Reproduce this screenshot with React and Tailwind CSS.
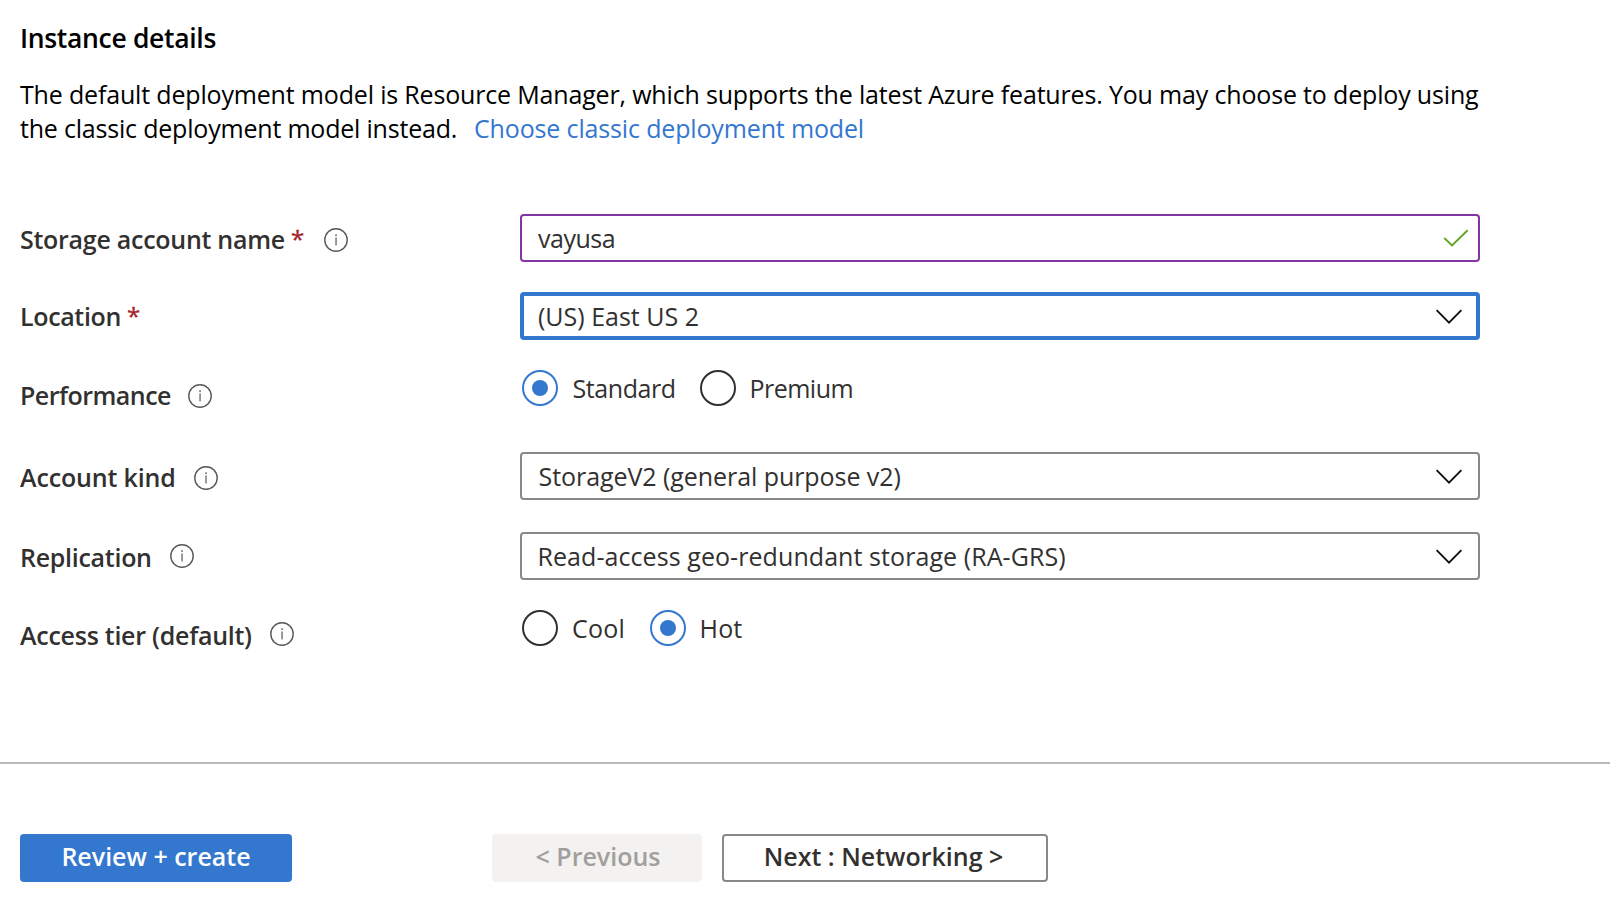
function InfoIcon({ className = "" }) {
  return (
    <svg viewBox="0 0 24 24" className={`size-6 shrink-0 ${className}`} fill="none">
      <circle cx="12" cy="12" r="11.2" stroke="#5a5957" strokeWidth="1.4" />
      <rect x="11.3" y="9.4" width="1.5" height="8" fill="#7a7977" />
      <rect x="11.2" y="6.3" width="1.7" height="1.7" fill="#7a7977" />
    </svg>
  );
}

function Chevron() {
  return (
    <svg viewBox="0 0 28 16" className="h-4 w-7 shrink-0" fill="none">
      <path d="M1.6 2.2 14 14.6 26.4 2.2" stroke="#111" strokeWidth="1.9" />
    </svg>
  );
}

function Label({ children, required, className = "", textClass = "", icon }) {
  return (
    <div className={`flex w-[500px] shrink-0 items-start ${className}`}>
      <div className={`shrink-0 font-semibold ${textClass}`}>
        {children}
        {required && (
          <span className="ml-[6px] inline-block -translate-y-px text-[24px] leading-none font-normal text-[#a4262c] [-webkit-text-stroke:0.4px_#a4262c]">
            *
          </span>
        )}
      </div>
      {icon && <InfoIcon className={icon} />}
    </div>
  );
}

function Radio({ checked, children, className = "" }) {
  return (
    <label className={`flex h-9 shrink-0 items-center ${className}`}>
      <span
        className={`flex size-9 shrink-0 items-center justify-center rounded-full border-2 ${
          checked ? "border-[#3477cf]" : "border-[#323130]"
        }`}
      >
        {checked && <span className="size-4 rounded-full bg-[#3477cf]" />}
      </span>
      {children}
    </label>
  );
}

function Select({ children, className = "" }) {
  return (
    <div className={`flex h-12 w-[960px] items-center justify-between rounded-[4px] ${className}`}>
      {children}
      <Chevron />
    </div>
  );
}

export default function App() {
  return (
    <div className="flex h-[912px] w-[1610px] flex-col overflow-hidden bg-white font-['Open_Sans','Segoe_UI',sans-serif] text-[25px] leading-[34px] whitespace-nowrap text-[#323130]">
      <main className="flex h-[762px] flex-col pt-5 pl-5">
        <h1 className="text-[26.5px] leading-9 font-semibold tracking-[-0.32px] text-black">Instance details</h1>
        <p className="mt-[21px] text-black">
          <span className="block tracking-[-0.17px]">
            The default deployment model is Resource Manager, which supports the latest Azure features. You may choose to deploy using
          </span>
          <span className="flex">
            <span className="w-[454px] tracking-[-0.2px]">the classic deployment model instead.</span>
            <a className="tracking-[-0.15px] text-[#3477cf]">Choose classic deployment model</a>
          </span>
        </p>

        <form className="mt-[69px] flex flex-col">
          <div className="flex h-[78px]">
            <Label required className="pt-2" textClass="w-[304px] tracking-[-0.27px]" icon="mt-1.5">
              Storage account name
            </Label>
            <div className="flex h-12 w-[960px] items-center justify-between rounded-[4px] border-2 border-[#8235a3] pr-[9px] pl-4">
              <span className="tracking-[-0.5px]">vayusa</span>
              <svg viewBox="0 0 26 18" className="h-[18px] w-[26px]" fill="none">
                <path d="M1.3 9 9 16.4 24.7 1.2" stroke="#5fa52a" strokeWidth="1.9" />
              </svg>
            </div>
          </div>
          <div className="flex h-[78px]">
            <Label required className="pt-[7px]" textClass="tracking-[-0.35px]">
              Location
            </Label>
            <Select className="border-4 border-[#3477cf] pr-[13px] pl-[14px]">
              <span>(US) East US 2</span>
            </Select>
          </div>
          <div className="flex h-[82px]">
            <Label className="pt-2" textClass="w-[168px] tracking-[-0.53px]" icon="mt-1.5">
              Performance
            </Label>
            <div className="flex pl-0.5">
              <Radio checked className="w-[178px] gap-[14.5px]">
                <span className="tracking-[-0.42px]">Standard</span>
              </Radio>
              <Radio className="gap-[13.5px]">
                <span className="tracking-[-0.52px]">Premium</span>
              </Radio>
            </div>
          </div>
          <div className="flex h-20">
            <Label className="pt-2" textClass="w-[174px] tracking-[-0.15px]" icon="mt-1.5">
              Account kind
            </Label>
            <Select className="border-2 border-[#8a8886] pr-[15px] pl-[16.5px]">
              <span className="tracking-[-0.06px]">StorageV2 (general purpose v2)</span>
            </Select>
          </div>
          <div className="flex h-[78px]">
            <Label className="pt-2" textClass="w-[150px] tracking-[-0.28px]" icon="mt-1">
              Replication
            </Label>
            <Select className="border-2 border-[#8a8886] pr-[15px] pl-[15.5px]">
              <span className="tracking-[0.07px]">Read-access geo-redundant storage (RA-GRS)</span>
            </Select>
          </div>
          <div className="flex h-12">
            <Label className="pt-2" textClass="w-[250px] tracking-[-0.26px]" icon="mt-1">
              Access tier (default)
            </Label>
            <div className="flex pl-0.5">
              <Radio className="w-32 gap-[14px]">
                <span className="tracking-[0.2px]">Cool</span>
              </Radio>
              <Radio checked className="gap-[13.5px]">
                <span className="tracking-[0.2px]">Hot</span>
              </Radio>
            </div>
          </div>
        </form>
      </main>

      <footer className="flex h-[150px] border-t-2 border-[#b9b9b9] pt-[70px] pl-5 font-semibold">
        <button className="h-12 w-[272px] rounded-[4px] bg-[#3477cf] pb-1 text-white">Review + create</button>
        <button className="ml-[200px] h-12 w-[210px] rounded-[4px] bg-[#f3f2f1] pb-1 pl-[2px] text-[#a19f9d]">&lt; Previous</button>
        <button className="ml-5 h-12 w-[326px] rounded-[4px] border-2 border-[#8a8886] bg-white pr-[3px] pb-1">Next : Networking &gt;</button>
      </footer>
    </div>
  );
}
